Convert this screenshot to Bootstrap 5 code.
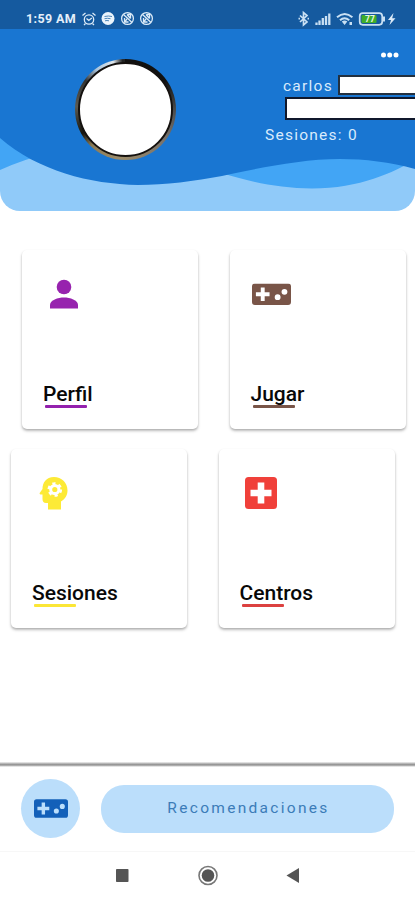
<!DOCTYPE html>
<html lang="es">
<head>
<meta charset="utf-8">
<meta name="viewport" content="width=device-width, initial-scale=1">
<title>Inicio</title>
<link href="https://cdn.jsdelivr.net/npm/bootstrap@5.3.0/dist/css/bootstrap.min.css" rel="stylesheet">
<style>
body{font-family:Roboto,"Liberation Sans",sans-serif;height:900px;overflow:hidden}
svg{display:block;flex:none}
.hero{height:211px;background:#90caf9;border-radius:0 0 20px 20px;display:grid;overflow:hidden;flex:none}
.hero>*{grid-area:1/1;min-width:0}
.statusbar{height:29px;background:#155a9f;padding:7px 18px 0 26px;color:#e4effa}
.clock{font-size:12.5px;font-weight:700;letter-spacing:.35px;line-height:24px;width:54px;white-space:nowrap}
.avatar{width:101px;height:101px;border-radius:50%;margin:30px 0 0 75px;padding:3px;background:conic-gradient(#111 0 15%,#555 27%,#77716a 35%,#9c8c6b 52%,#8a7a55 62%,#15140f 67%,#5c5a50 76%,#333 85%,#a9c4dc 90%,#dfe6ea 96%,#222 99%)}
.avatar>div{width:100%;height:100%;border-radius:50%;background:#fff;border:2px solid #14110f}
.userinfo{color:#d9ebfc;font-size:15.5px;letter-spacing:1.25px;line-height:20px;white-space:nowrap}
.dots{margin:22px 0 0 204px}
.user-name{margin:16px 0 0 107px}
.user-name span{width:55px;line-height:23px}
.user-more{margin:-1px 0 0 89px}
.mask1{width:80px;height:20px;background:#fff;border:2px solid #23303f}
.mask2{width:140px;height:23px;background:#fff;border:2px solid #10182c;margin-left:20px}
.tiles{padding:39px 0 0 22px;height:551px;flex:none}
.tile-row{gap:31.5px;height:199px}
.tile-row.second{margin-left:-11px}
.tile{width:176px;height:179px;border:0;border-radius:5px;padding:0 21px;box-shadow:0 2px 3px rgba(0,0,0,.25),0 1px 2px rgba(0,0,0,.1);flex:none}
.tile svg{margin-top:23px}
.tile h2{font-size:21px;font-weight:500;line-height:24px;margin:67px 0 0;color:#080808}
.rule{width:42px;height:3px;border-radius:1px;margin:-1px 0 0 2px}
.shade{height:5px;background:linear-gradient(#f4f4f4,#999 45%,#929292 60%,#fff)}
.play-bar{height:84px;padding:0 0 1px 21px;gap:21px}
.play{width:59px;height:59px;border-radius:50%;background:#bbdefb}
.rec{width:293px;height:48px;border-radius:23px;background:#bbdefb;color:#3c7cb8;font-size:15.5px;letter-spacing:2.3px;border:0;padding:0 0 0 2px}
.sysnav{height:49px;border-top:1px solid #f7f7f7}
</style>
<script src="https://cdn.jsdelivr.net/npm/bootstrap@5.3.0/dist/js/bootstrap.bundle.min.js"></script>
</head>
<body class="d-flex flex-column bg-white">
<svg width="0" height="0" class="position-absolute" aria-hidden="true">
  <symbol id="pad" viewBox="0 0 40 22"><path fill="currentColor" fill-rule="evenodd" d="M3 0H37Q40 0 40 3V19Q40 22 37 22H3Q0 22 0 19V3Q0 0 3 0ZM9 4V9H4V13H9V18H13V13H18V9H13V4ZM23.3 14a3 3 0 1 0 6 0a3 3 0 1 0-6 0ZM30.3 8.5a3 3 0 1 0 6 0a3 3 0 1 0-6 0Z"/></symbol>
</svg>
<header class="hero">
  <svg width="415" height="211" viewBox="0 0 415 211">
    <path fill="#42a5f5" d="M0 0H415V160C394 172 360 188.500 312 188.500C278 188 246 181 222 173L60 150Q24 159 0 170Z"/>
    <path fill="#1976d2" d="M0 0H415V169C390 162 365 159 340 159C300 159 255 169 222 176C195 181 165 185 138 185C90 184 38 171 0 138Z"/>
  </svg>
  <div>
    <div class="statusbar d-flex">
      <div class="clock">1:59 AM</div>
      <svg width="78" height="22" viewBox="80 7 78 22" fill="none" stroke="#dcebf8" stroke-width="1.3">
        <circle cx="89" cy="19.500" r="4.700"/><path d="M86.500 18.500l2.300 2 3-2.500M82.500 15.500l3-2.500M95.500 15.500l-3-2.500M85.500 23.500l-1.500 1.500M92.500 23.500l1.500 1.500"/>
        <circle cx="108" cy="18.500" r="6.500" fill="#eaf4fc" stroke="none"/><path stroke="#4e86ba" stroke-width="1" d="M104.500 16.500q4-1 7.500 0M104.500 18.700q3-.8 6 0M105 20.800q2-.6 4 0"/>
        <g id="spin"><circle cx="127.500" cy="18.500" r="5.900"/><path d="M123.500 14.500l8.500 8M127 14.500l3.500 4M127.500 14.500h3v4M124.500 18v4h4M124.500 22l2.500-3"/></g>
        <use href="#spin" x="19"/>
      </svg>
      <svg class="ms-auto" width="100" height="22" viewBox="297 7 100 22" fill="none" stroke="#c9e0f3" stroke-width="1.700">
        <path d="M300 15.500l7 6.500-3.500 3V12.500l3.500 3-7 6.500M298.500 18.700h1.500M307.500 18.700h1.500"/>
        <path stroke-width="2.300" d="M316.500 25v-2.500M319.500 25v-4.500M322.800 25v-7M326 25v-9M329.300 25v-11.500"/>
        <path stroke-width="2" d="M337 17.300q7.700-6.600 15.400 0M340 20.300q4.500-4.200 9.200 0"/><path fill="#c9e0f3" stroke="none" d="M341.800 21.500q2.800-2 5.500 0l-2.700 3.500zM349.500 22h2.500v3h-2.500z"/>
        <rect x="359.700" y="13.200" width="22.500" height="11.600" rx="3"/><path stroke-width="2" d="M384 16.500v5"/>
        <rect x="361.500" y="15" width="15" height="8" rx="1" fill="#3fae29" stroke="none"/>
        <text x="365" y="22.200" font-family="Roboto,sans-serif" font-size="8.500" font-weight="700" fill="#e9f7e2" stroke="none">77</text>
        <path fill="#dcebf8" stroke="none" d="M393.500 13l-5.500 7h3l-1.500 5 6-6.800h-3.300z"/>
      </svg>
    </div>
    <div class="d-flex">
      <div class="avatar flex-shrink-0"><div></div></div>
      <div class="userinfo">
        <svg class="dots" width="20" height="8" viewBox="0 0 20 8" fill="#fff"><circle cx="3.500" cy="4" r="2.500"/><circle cx="9.700" cy="4" r="2.500"/><circle cx="16" cy="4" r="2.500"/></svg>
        <div class="user-name d-flex"><span>carlos</span><div class="mask1"></div></div>
        <div class="user-more"><div class="mask2"></div><div style="line-height:31px">Sesiones: 0</div></div>
      </div>
    </div>
  </div>
</header>
<main class="tiles">
  <div class="tile-row d-flex">
    <a class="tile card text-decoration-none" href="#">
      <svg width="42" height="42" viewBox="0 0 42 42" fill="#9723ae"><circle cx="21" cy="14" r="7.300"/><path d="M7 35.500V32C7 27 15 24.500 21 24.500S35 27 35 32v3.500z"/></svg>
      <h2>Perfil</h2><div class="rule" style="background:#9421ad"></div>
    </a>
    <a class="tile card text-decoration-none" href="#">
      <svg width="42" height="42" viewBox="0 0 42 42" color="#795548"><use href="#pad" x="1" y="10.500" width="39" height="21.500"/></svg>
      <h2>Jugar</h2><div class="rule" style="background:#795548"></div>
    </a>
  </div>
  <div class="tile-row second d-flex">
    <a class="tile card text-decoration-none" href="#">
      <svg width="42" height="42" viewBox="0 0 42 42"><path fill="#fdea36" d="M22 5C14 5 10.500 11 10.500 17L7.700 21Q7.200 22 8.500 22.500H10.500V27Q10.500 31 14 31H16V37.500H29V29.500C33 27 35.500 23.500 35.500 18.500C35.500 10.500 29.500 5 22 5Z"/><circle cx="22.800" cy="17.500" r="4.100" fill="none" stroke="#fff" stroke-width="3"/><circle cx="22.800" cy="17.500" r="6" fill="none" stroke="#fff" stroke-width="2.600" stroke-dasharray="3.140 3.140"/></svg>
      <h2>Sesiones</h2><div class="rule" style="background:#fbe636"></div>
    </a>
    <a class="tile card text-decoration-none" href="#">
      <svg width="42" height="42" viewBox="0 0 42 42"><rect x="5" y="5" width="32" height="32" rx="3.500" fill="#f0403a"/><path fill="#fff" d="M17.700 10.500h6.600v7.200H31.500v6.600H24.300V31.500h-6.600V24.300H10.500v-6.600h7.200z"/></svg>
      <h2>Centros</h2><div class="rule" style="background:#dc4140"></div>
    </a>
  </div>
</main>
<footer class="flex-shrink-0">
  <div class="shade"></div>
  <div class="play-bar d-flex align-items-center">
    <a class="play d-flex align-items-center justify-content-center" href="#"><svg width="34" height="19" color="#1360b9"><use href="#pad" width="34" height="19"/></svg></a>
    <button class="rec btn" type="button">Recomendaciones</button>
  </div>
  <nav class="sysnav">
    <svg width="415" height="47" viewBox="0 852 415 47" fill="#555"><rect x="116" y="869" width="12.500" height="13" rx=".8"/><circle cx="208" cy="875.500" r="9" fill="none" stroke="#777" stroke-width="1.600"/><circle cx="208" cy="875.500" r="6.300"/><path d="M286.500 875.500l12.500-7.500v15z"/></svg>
  </nav>
</footer>
</body>
</html>
